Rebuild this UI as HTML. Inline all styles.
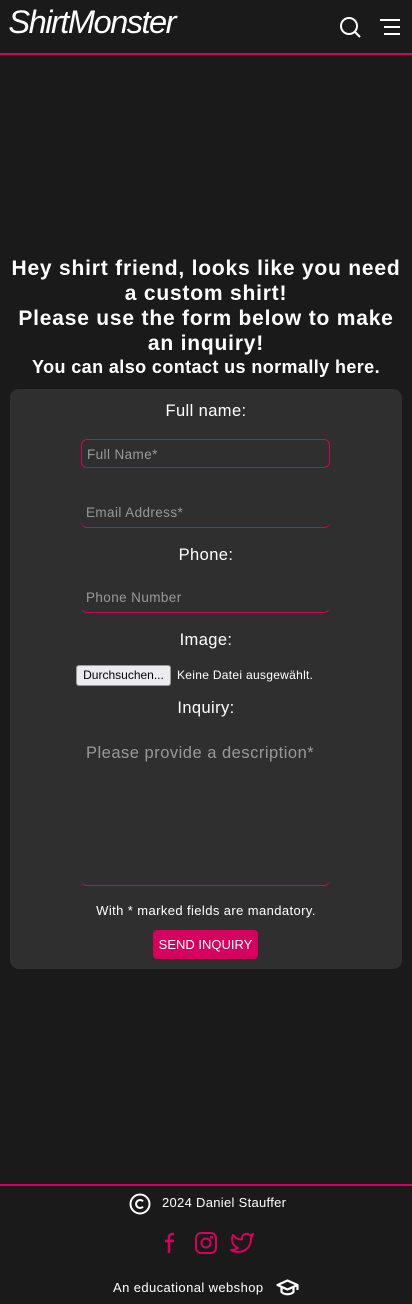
<!DOCTYPE html>
<html><head><meta charset="utf-8"><style>
*{box-sizing:border-box;margin:0;padding:0}
body{width:412px;height:1304px;background:#1a1a1a;font-family:"Liberation Sans",sans-serif;color:#fff;position:relative;overflow:hidden}
.hdr{position:absolute;top:0;left:0;width:412px;height:55px;border-bottom:2px solid #d6005e}
.logo{position:absolute;left:10px;top:4px;font-family:"Liberation Sans",sans-serif;font-style:italic;font-size:32px;letter-spacing:-1.5px;color:#fff;transform:scaleX(1.02)}
h1{position:absolute;top:256px;left:0;width:412px;text-align:center;font-size:21px;letter-spacing:.8px;line-height:25px;font-weight:bold}
h2{position:absolute;top:357px;left:0;width:412px;text-align:center;font-size:18px;letter-spacing:.4px;font-weight:bold}
.card{position:absolute;left:10px;top:389px;width:392px;height:580px;background:#2f2f2f;border-radius:9px}
.lbl{position:absolute;left:0;width:392px;text-align:center;font-size:16.5px;letter-spacing:.4px}
.inp{position:absolute;left:71px;width:249px;height:30px;border-bottom:1px solid #d6005e;border-radius:6px;color:#999;font-size:13.5px;letter-spacing:.4px;padding:7px 5px}
.btn{position:absolute;left:143px;top:541px;width:105px;height:29px;background:#d6005e;border-radius:4px;font-size:13px;text-align:center;line-height:29px}
.foot{position:absolute;top:1184px;left:0;width:412px;border-top:2px solid #d6005e}
</style></head><body>
<div class="hdr">
<div class="logo">ShirtMonster</div>
<svg style="position:absolute;left:339px;top:16px" width="24" height="24" viewBox="0 0 24 24" fill="none" stroke="#fff" stroke-width="2"><circle cx="10" cy="10" r="8"/><path d="M16 16l5 5"/></svg>
<svg style="position:absolute;left:379px;top:18px" width="22" height="18" viewBox="0 0 22 18" stroke="#fff" stroke-width="2"><path d="M1 2h20M5 9h16M5 16h16"/></svg>
</div>
<h1>Hey shirt friend, looks like you need<br>a custom shirt!<br>Please use the form below to make<br>an inquiry!</h1>
<h2>You can also contact us normally here.</h2>
<div class="card">
<div class="lbl" style="top:13px">Full name:</div>
<div class="inp" style="top:50px;border:1px solid #d6005e;height:29px">Full Name*</div>
<div class="inp" style="top:109px">Email Address*</div>
<div class="lbl" style="top:157px">Phone:</div>
<div class="inp" style="top:194px">Phone Number</div>
<div class="lbl" style="top:242px">Image:</div>
<div style="position:absolute;left:66px;top:276px;width:95px;height:21px;background:#ececf0;border:1px solid #999;border-radius:3px;color:#000;font-size:12px;text-align:center;line-height:19px">Durchsuchen...</div>
<div style="position:absolute;left:167px;top:279px;font-size:12px;letter-spacing:.3px">Keine Datei ausgewählt.</div>
<div class="lbl" style="top:310px">Inquiry:</div>
<div class="inp" style="top:348px;height:149px;font-size:16.5px;letter-spacing:.5px;color:#999">Please provide a description*</div>
<div style="position:absolute;top:514px;left:0;width:392px;text-align:center;font-size:13px;letter-spacing:.4px">With * marked fields are mandatory.</div>
<div class="btn">SEND INQUIRY</div>
</div>
<div class="foot">
<svg style="position:absolute;left:129px;top:7px" width="22" height="22" viewBox="0 0 22 22" fill="none" stroke="#fff" stroke-width="2"><circle cx="11" cy="11" r="9.5"/><path d="M14 8.3a4 4 0 1 0 0 5.4"/></svg>
<div style="position:absolute;left:162px;top:9px;font-size:13px;letter-spacing:.3px">2024 Daniel Stauffer</div>
<svg style="position:absolute;left:161px;top:45px" width="20" height="24" viewBox="0 0 20 24" fill="none" stroke="#d6005e" stroke-width="2.6"><path d="M13 3h-2a3 3 0 0 0-3 3v16M4 10h9"/></svg>
<svg style="position:absolute;left:194px;top:45px" width="24" height="24" viewBox="0 0 24 24" fill="none" stroke="#d6005e" stroke-width="2"><rect x="2" y="2" width="20" height="20" rx="5"/><circle cx="12" cy="12" r="4.5"/><circle cx="17.5" cy="6.5" r=".6"/></svg>
<svg style="position:absolute;left:230px;top:46px" width="25" height="22" viewBox="0 0 25 22" fill="none" stroke="#d6005e" stroke-width="2" stroke-linejoin="round"><path d="M23 2a10 10 0 0 1-3 1.5 4.5 4.5 0 0 0-8 3v1A10.7 10.7 0 0 1 3 3s-4 9 5 13a11.6 11.6 0 0 1-7 2c9 5 20 0 20-11.5 0-.3 0-.6-.1-.8A7.7 7.7 0 0 0 23 2z"/></svg>
<div style="position:absolute;left:113px;top:94px;font-size:13px;letter-spacing:.4px">An educational webshop</div>
<svg style="position:absolute;left:276px;top:92px" width="23" height="20" viewBox="0 0 23 20" fill="none" stroke="#fff" stroke-width="2.2" stroke-linejoin="round"><path d="M1.5 7l10-4.5 10 4.5-10 4.5z M5.5 9v5c3 3 9 3 12 0V9 M21.5 7v5"/></svg>
</div>
</body></html>
